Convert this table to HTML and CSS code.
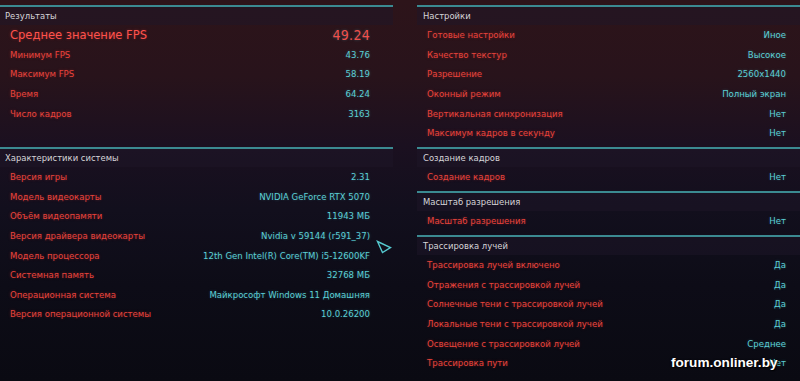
FILE: index.html
```html
<!DOCTYPE html>
<html lang="ru">
<head>
<meta charset="utf-8">
<title>Результаты теста</title>
<link rel="stylesheet" href="styles.css">
</head>
<body>
<div class="screen">
  <div class="grid">
    <section class="panel">
      <div class="panel-head">Результаты</div>
      <div class="row row-main"><span class="label">Среднее значение FPS</span><span class="value">49.24</span></div>
      <div class="row"><span class="label">Минимум FPS</span><span class="value">43.76</span></div>
      <div class="row"><span class="label">Максимум FPS</span><span class="value">58.19</span></div>
      <div class="row"><span class="label">Время</span><span class="value">64.24</span></div>
      <div class="row"><span class="label">Число кадров</span><span class="value">3163</span></div>
    </section>

    <section class="panel panel-right">
      <div class="panel-head">Настройки</div>
      <div class="row"><span class="label">Готовые настройки</span><span class="value">Иное</span></div>
      <div class="row"><span class="label">Качество текстур</span><span class="value">Высокое</span></div>
      <div class="row"><span class="label">Разрешение</span><span class="value">2560x1440</span></div>
      <div class="row"><span class="label">Оконный режим</span><span class="value">Полный экран</span></div>
      <div class="row"><span class="label">Вертикальная синхронизация</span><span class="value">Нет</span></div>
      <div class="row"><span class="label">Максимум кадров в секунду</span><span class="value">Нет</span></div>
    </section>

    <section class="panel">
      <div class="panel-head">Характеристики системы</div>
      <div class="row"><span class="label">Версия игры</span><span class="value">2.31</span></div>
      <div class="row"><span class="label">Модель видеокарты</span><span class="value">NVIDIA GeForce RTX 5070</span></div>
      <div class="row"><span class="label">Объём видеопамяти</span><span class="value">11943 МБ</span></div>
      <div class="row"><span class="label">Версия драйвера видеокарты</span><span class="value">Nvidia v 59144 (r591_37)</span></div>
      <div class="row"><span class="label">Модель процессора</span><span class="value">12th Gen Intel(R) Core(TM) i5-12600KF</span></div>
      <div class="row"><span class="label">Системная память</span><span class="value">32768 МБ</span></div>
      <div class="row"><span class="label">Операционная система</span><span class="value">Майкрософт Windows 11 Домашняя</span></div>
      <div class="row"><span class="label">Версия операционной системы</span><span class="value">10.0.26200</span></div>
    </section>

    <div class="stack">
      <section class="panel panel-right">
        <div class="panel-head">Создание кадров</div>
        <div class="row"><span class="label">Создание кадров</span><span class="value">Нет</span></div>
      </section>
      <section class="panel panel-right">
        <div class="panel-head">Масштаб разрешения</div>
        <div class="row"><span class="label">Масштаб разрешения</span><span class="value">Нет</span></div>
      </section>
      <section class="panel panel-right">
        <div class="panel-head">Трассировка лучей</div>
        <div class="row"><span class="label">Трассировка лучей включено</span><span class="value">Да</span></div>
        <div class="row"><span class="label">Отражения с трассировкой лучей</span><span class="value">Да</span></div>
        <div class="row"><span class="label">Солнечные тени с трассировкой лучей</span><span class="value">Да</span></div>
        <div class="row"><span class="label">Локальные тени с трассировкой лучей</span><span class="value">Да</span></div>
        <div class="row"><span class="label">Освещение с трассировкой лучей</span><span class="value">Среднее</span></div>
        <div class="row"><span class="label">Трассировка пути</span><span class="value">Нет</span></div>
      </section>
    </div>
  </div>

  <svg class="cursor" width="16" height="14" viewBox="0 0 16 14">
    <polygon points="1.5,1.5 14.5,7.5 6.5,12.5" fill="none" stroke="#55c9cf" stroke-width="1.4" stroke-linejoin="miter"/>
  </svg>

  <div class="watermark">forum.onliner.by</div>
</div>
</body>
</html>
```

FILE: styles.css
```css
* { box-sizing: border-box; }

html, body {
  margin: 0;
  padding: 0;
}

body {
  width: 800px;
  height: 381px;
  overflow: hidden;
  background: linear-gradient(180deg, #2d141a 0%, #28131b 20%, #1b1020 38%, #120f1d 55%, #0d0c17 75%, #0a0a12 100%);
  font-family: "DejaVu Sans Condensed", "DejaVu Sans", sans-serif;
}

.screen {
  position: relative;
  width: 800px;
  height: 381px;
  padding-top: 5px;
}

.grid {
  display: grid;
  grid-template-columns: 393px 383px;
  column-gap: 24px;
  row-gap: 4.4px;
  align-items: start;
}

.stack {
  display: flex;
  flex-direction: column;
  gap: 4.4px;
}

.panel {
  border-top: 2px solid #3b8a91;
}

.panel-head {
  height: 18px;
  line-height: 18px;
  padding-left: 5px;
  font-size: 9.4px;
  color: #d6d4d8;
  background: rgba(30, 22, 40, 0.5);
}

.panel-right .panel-head {
  padding-left: 6px;
}

.row {
  height: 19.6px;
  display: flex;
  align-items: center;
  justify-content: space-between;
  padding: 0 23px 0 10px;
}

.panel-right .row {
  padding: 0 14px 0 10px;
}

.label {
  font-size: 9.5px;
  color: #e8433b;
  text-shadow: 0 0 3px rgba(230, 60, 55, 0.35);
}

.value {
  font-size: 9.5px;
  color: #5ccfd5;
  text-shadow: 0 0 3px rgba(80, 200, 210, 0.3);
}

.row-main .label {
  font-size: 12.8px;
  color: #ff524c;
}

.row-main .value {
  font-size: 14px;
  letter-spacing: 0.3px;
  color: #f0504c;
}

.cursor {
  position: absolute;
  left: 376px;
  top: 240px;
}

.watermark {
  position: absolute;
  left: 671px;
  top: 355px;
  font-family: "Liberation Sans", Arial, sans-serif;
  font-weight: bold;
  font-size: 13.6px;
  color: #ffffff;
  text-shadow: 0 0 2px rgba(0, 0, 0, 0.9), 1px 1px 1px rgba(0, 0, 0, 0.8);
}
```
